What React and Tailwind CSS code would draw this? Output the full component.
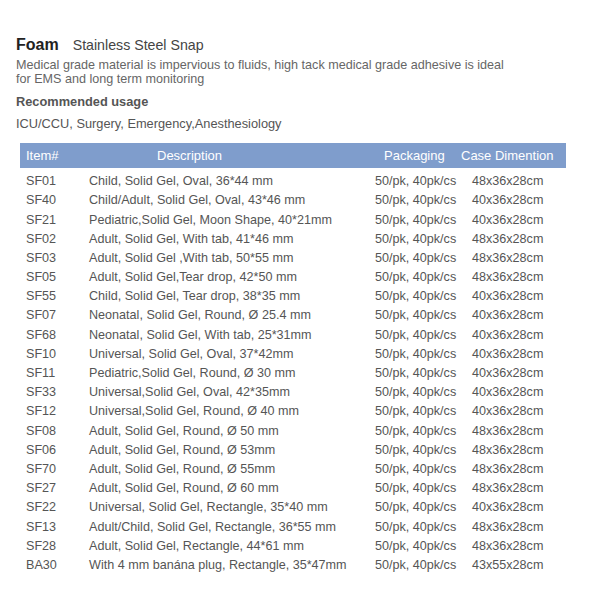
const rows = [
  ["SF01", "Child, Solid Gel, Oval, 36*44 mm", "48x36x28cm"],
  ["SF40", "Child/Adult, Solid Gel, Oval, 43*46 mm", "40x36x28cm"],
  ["SF21", "Pediatric,Solid Gel, Moon Shape, 40*21mm", "40x36x28cm"],
  ["SF02", "Adult, Solid Gel, With tab, 41*46 mm", "48x36x28cm"],
  ["SF03", "Adult, Solid Gel ,With tab, 50*55 mm", "48x36x28cm"],
  ["SF05", "Adult, Solid Gel,Tear drop, 42*50 mm", "48x36x28cm"],
  ["SF55", "Child, Solid Gel, Tear drop, 38*35 mm", "40x36x28cm"],
  ["SF07", "Neonatal, Solid Gel, Round, Ø 25.4 mm", "40x36x28cm"],
  ["SF68", "Neonatal, Solid Gel, With tab, 25*31mm", "40x36x28cm"],
  ["SF10", "Universal, Solid Gel, Oval, 37*42mm", "40x36x28cm"],
  ["SF11", "Pediatric,Solid Gel, Round, Ø 30 mm", "40x36x28cm"],
  ["SF33", "Universal,Solid Gel, Oval, 42*35mm", "40x36x28cm"],
  ["SF12", "Universal,Solid Gel, Round, Ø 40 mm", "40x36x28cm"],
  ["SF08", "Adult, Solid Gel, Round, Ø 50 mm", "48x36x28cm"],
  ["SF06", "Adult, Solid Gel, Round, Ø 53mm", "48x36x28cm"],
  ["SF70", "Adult, Solid Gel, Round, Ø 55mm", "48x36x28cm"],
  ["SF27", "Adult, Solid Gel, Round, Ø 60 mm", "48x36x28cm"],
  ["SF22", "Universal, Solid Gel, Rectangle, 35*40 mm", "40x36x28cm"],
  ["SF13", "Adult/Child, Solid Gel, Rectangle, 36*55 mm", "48x36x28cm"],
  ["SF28", "Adult, Solid Gel, Rectangle, 44*61 mm", "48x36x28cm"],
  ["BA30", "With 4 mm banána plug, Rectangle, 35*47mm", "43x55x28cm"],
];

export default function App() {
  return (
    <div className="w-[600px] h-[600px] bg-white font-['Liberation_Sans',Arial,sans-serif] pt-[35px] pl-[16px]">
      <div className="flex items-baseline gap-[14px] leading-[20px]">
        <span className="text-[16px] font-bold text-[#222]">Foam</span>
        <span className="text-[14.2px] text-[#444]">Stainless Steel Snap</span>
      </div>
      <p className="mt-[3px] text-[12.6px] leading-[14px] text-[#666]">
        Medical grade material is impervious to fluids, high tack medical grade adhesive is ideal
        <br />
        for EMS and long term monitoring
      </p>
      <p className="mt-[8px] text-[12.8px] font-bold leading-[16px] text-[#555]">Recommended usage</p>
      <p className="mt-[5px] text-[12.8px] leading-[18px] text-[#555]">ICU/CCU, Surgery, Emergency,Anesthesiology</p>

      <div className="mt-[10px] ml-[4px] w-[546px]">
        <div className="grid grid-cols-[69px_286px_86px_1fr] h-[25px] items-center bg-[#7f9dcc] text-[13px] text-white">
          <span className="pl-[6px]">Item#</span>
          <span className="pl-[68px]">Description</span>
          <span className="pl-[9px]">Packaging</span>
          <span>Case Dimention</span>
        </div>
        <div className="pt-[4px]">
          {rows.map(([id, desc, dim]) => (
            <div key={id} className="grid grid-cols-[69px_286px_86px_1fr] h-[19.2px] items-center text-[12.6px] text-[#555] whitespace-nowrap">
              <span className="pl-[6px]">{id}</span>
              <span>{desc}</span>
              <span>50/pk, 40pk/cs</span>
              <span className="pl-[11px]">{dim}</span>
            </div>
          ))}
        </div>
      </div>
    </div>
  );
}
